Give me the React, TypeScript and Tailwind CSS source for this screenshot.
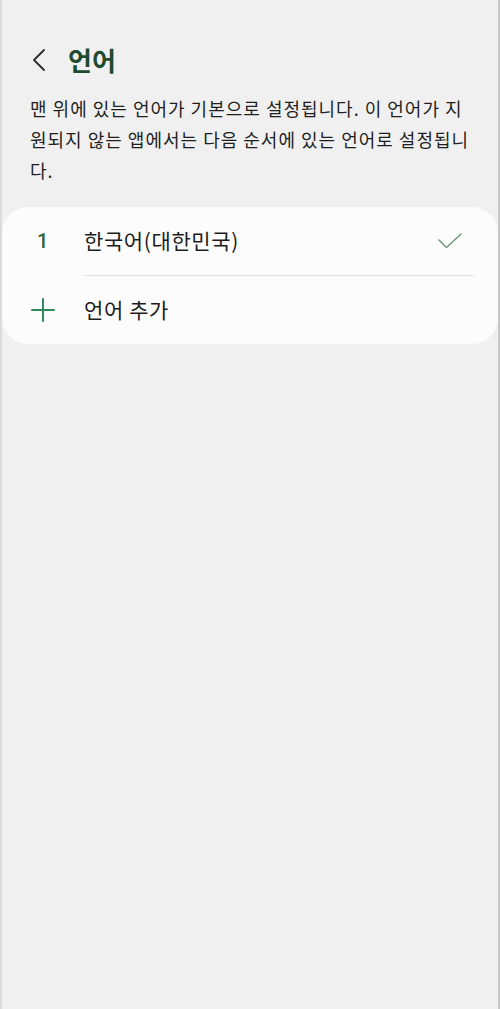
import React from 'react';

const font = { fontFamily: '"Noto Sans CJK KR", "Noto Sans", Roboto, sans-serif' };

function BackIcon() {
  return (
    <svg width="14" height="24" viewBox="0 0 14 24" fill="none">
      <path d="M12 2 L2 12 L12 22" stroke="#2b2b2b" strokeWidth="1.8" strokeLinecap="round" strokeLinejoin="round" />
    </svg>
  );
}

function CheckIcon() {
  return (
    <svg width="26" height="18" viewBox="0 0 26 18" fill="none">
      <path d="M2 8 L9.5 15.5 L24 2" stroke="#6e9d80" strokeWidth="1.6" strokeLinecap="round" strokeLinejoin="round" />
    </svg>
  );
}

function PlusIcon() {
  return (
    <svg width="24" height="24" viewBox="0 0 24 24" fill="none">
      <path d="M12 1 V23 M1 12 H23" stroke="#2e8a5c" strokeWidth="2" strokeLinecap="round" />
    </svg>
  );
}

export default function App() {
  return (
    <div
      className="w-[500px] h-[1009px] bg-[#f0f0f0] border-l-2 border-r-2 border-l-[#dcdcdc] border-r-[#c8c8c8] flex flex-col"
      style={font}
    >
      {/* Header */}
      <div className="flex items-center h-[60px] mt-[30px] pl-[30px]">
        <BackIcon />
        <h1 className="ml-[22px] text-[26px] font-semibold text-[#1f4a30] leading-none">언어</h1>
      </div>

      {/* Description */}
      <p className="mt-[3px] px-[28px] text-[18px] tracking-[1px] leading-[31px] text-[#1f1f1f] break-all">
        맨 위에 있는 언어가 기본으로 설정됩니다. 이 언어가 지원되지 않는 앱에서는 다음 순서에 있는 언어로 설정됩니다.
      </p>

      {/* Language list */}
      <div className="mt-[21px] bg-[#fcfcfc] rounded-[26px]">
        <div className="flex items-center h-[68px]">
          <span className="w-[82px] pl-[35px] font-['Roboto',sans-serif] text-[20px] font-medium text-[#2a6442]">1</span>
          <span className="flex-1 text-[21px] tracking-[0.6px] text-[#1c1c1c]">한국어(대한민국)</span>
          <span className="mr-[35px]">
            <CheckIcon />
          </span>
        </div>
        <div className="ml-[82px] mr-[24px] h-px bg-[#e3e3e3]" />
        <div className="flex items-center h-[68px]">
          <span className="w-[82px] pl-[29px] flex">
            <PlusIcon />
          </span>
          <span className="flex-1 text-[21px] tracking-[0.6px] text-[#1c1c1c]">언어 추가</span>
        </div>
      </div>
    </div>
  );
}
